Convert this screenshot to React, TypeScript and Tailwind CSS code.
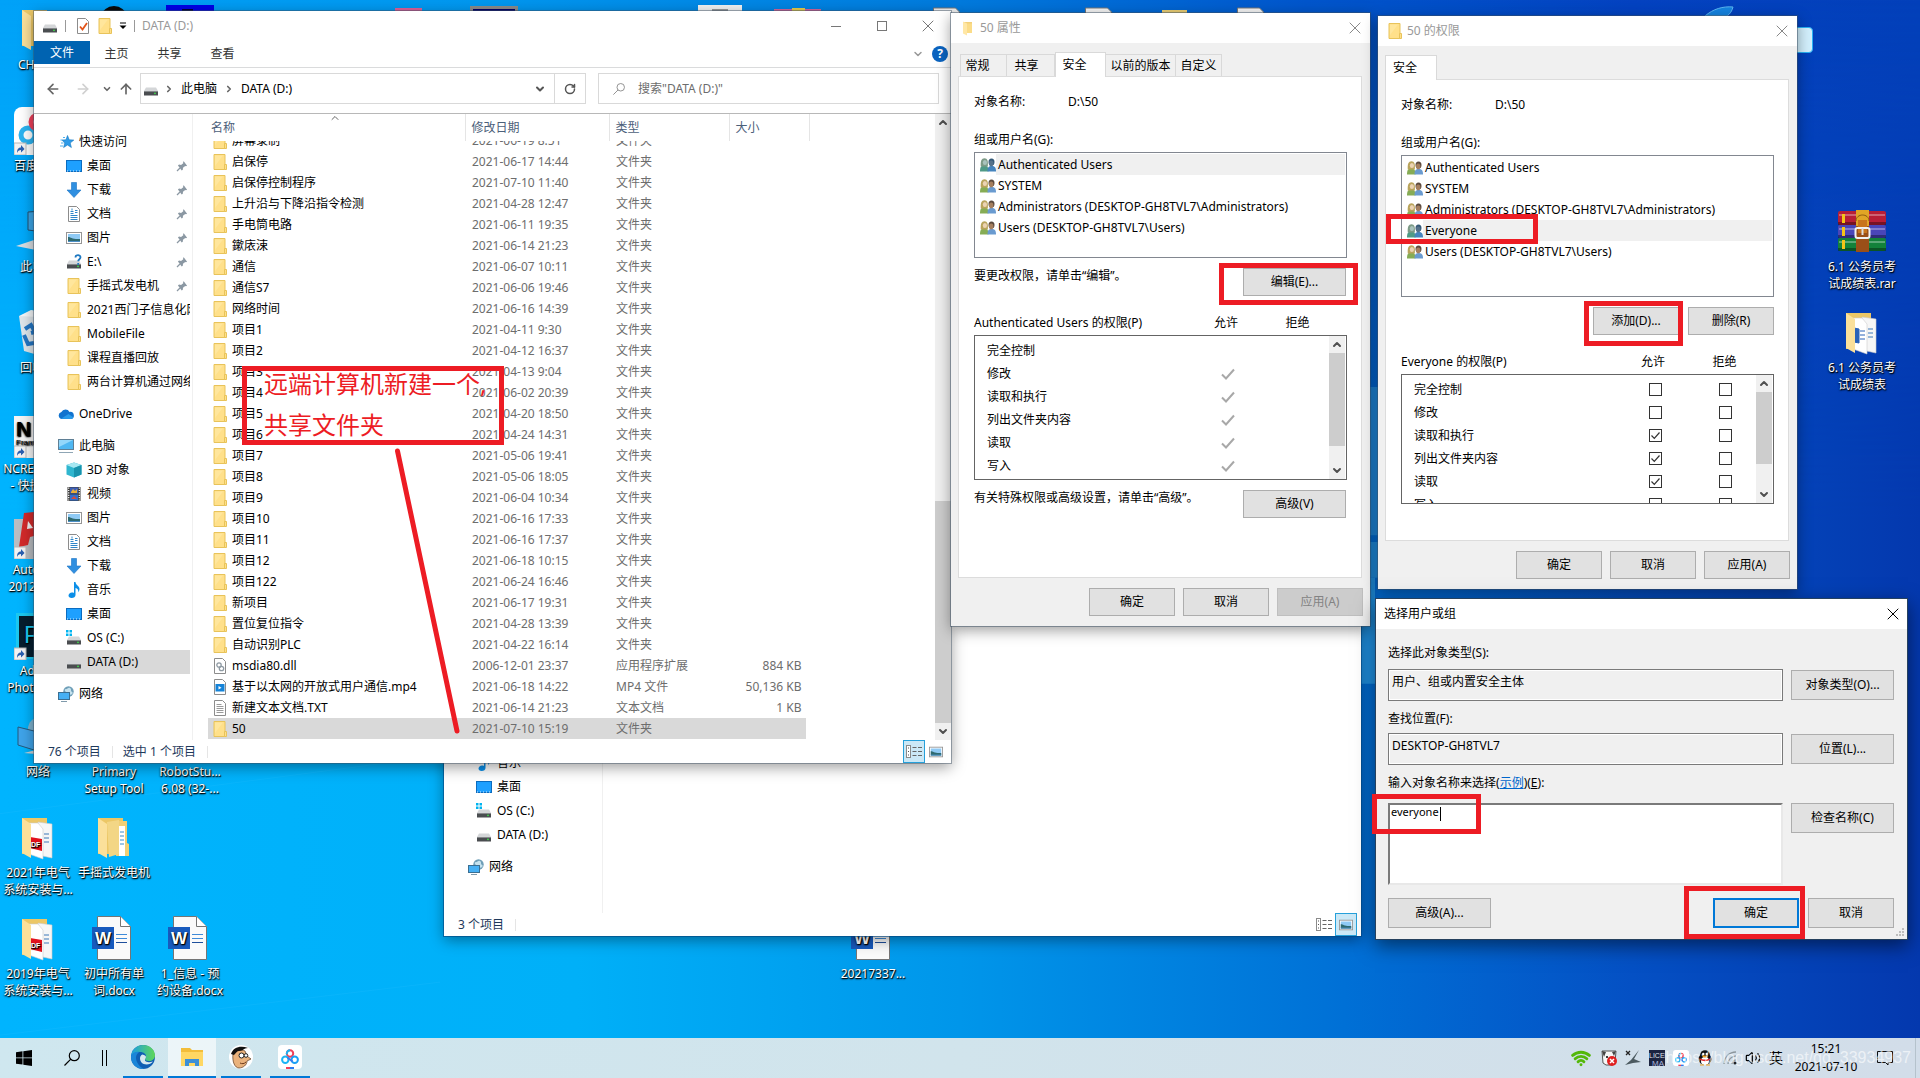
import React from 'react';
import { ArrowLeft, ArrowRight, ArrowUp, ChevronDown, ChevronRight, ChevronUp, RotateCw, Volume2, Wifi, X } from 'lucide-react';

interface FileRow {
  name: string;
  date: string;
  type?: string;
  size?: string;
  icon?: 'dll' | 'mp4' | 'txt';
}

interface NavItem {
  label: string;
  icon: React.ReactNode;
  pinned?: boolean;
  root?: boolean;
  gap?: boolean;
}

interface Permission {
  name: string;
  allow: boolean;
}

/* ---------- icons ---------- */

const FolderIcon: React.FC<{ className?: string }> = ({ className = 'w-4 h-4' }) => (
  <svg viewBox="0 0 16 16" className={className}>
    <path d="M2 .5h11v15H2z" fill="#ffe08a" stroke="#e8c35a" />
    <path d="M12.5 10.500h2v5h-2z" fill="#ffe08a" stroke="#e8c35a" />
    <path d="M3 1.500h8L3 12z" fill="#ffeaa8" opacity=".6" />
  </svg>
);

const OpenFolderIcon = () => (
  <svg viewBox="0 0 16 16" className="w-4 h-4">
    <path d="M4 2h8v10H4z" fill="#f3d07a" />
    <path d="M3 1.500l4 2v12l-4-2z" fill="#ffe7a6" />
    <path d="M7 3.500h5V13H7z" fill="#fbdc88" />
  </svg>
);

const MagnifierIcon: React.FC<{ className?: string }> = ({ className }) => (
  <svg viewBox="0 0 16 16" className={className}>
    <circle cx="10.300" cy="5.700" r="5" fill="none" stroke="currentColor" strokeWidth="1.200" />
    <path d="M6.800 9.200L.5 15.500" stroke="currentColor" strokeWidth="1.200" />
  </svg>
);

const DriveIcon: React.FC<{ kind?: 'os' | 'unknown' }> = ({ kind }) => (
  <svg viewBox="0 0 16 16" className="w-4 h-4">
    <path d="M3 6.500h10L15 10H1z" fill="#d4d6d8" />
    <rect x="1" y="10" width="14" height="4.500" fill="#4a4d50" />
    <rect x="1" y="10" width="14" height="1" fill="#85888b" />
    <circle cx="12" cy="12.300" r=".9" fill="#3ee04a" />
    {kind === 'os' && (
      <g fill="#00b4f0">
        <rect x="0" y="0" width="2.500" height="2.500" />
        <rect x="3.500" y="0" width="2.500" height="2.500" />
        <rect x="0" y="3.500" width="2.500" height="2.500" />
        <rect x="3.500" y="3.500" width="2.500" height="2.500" />
      </g>
    )}
    {kind === 'unknown' && (
      <path d="M9.500 3.500c0-3 5-3 5-.2 0 2-2.300 1.800-2.300 4M12.200 9v1.800" fill="none" stroke="#1f78c1" strokeWidth="1.800" />
    )}
  </svg>
);

const StarIcon = () => (
  <svg viewBox="0 0 16 16" className="w-4 h-4">
    <path d="M9.500 1.500l1.700 4.300 4.600.3-3.600 2.900 1.200 4.500-3.900-2.500-3.900 2.500 1.200-4.500L4 6.100l4-.3z" fill="#2e9be8" stroke="#1677c0" strokeWidth=".6" />
    <path d="M5 3.500h2M2.500 6h2M3 9h2.500M2 12h3" stroke="#4ab0f0" />
  </svg>
);

const DesktopNavIcon = () => (
  <svg viewBox="0 0 16 16" className="w-4 h-4">
    <rect x=".5" y="2.500" width="15" height="11" fill="#1ea0ff" stroke="#0b6cc0" />
    <path d="M1 13h14" stroke="#d8efff" strokeDasharray="1 2" />
  </svg>
);

const DownloadIcon = () => (
  <svg viewBox="0 0 16 16" className="w-4 h-4">
    <path d="M5.500 .5h5v7.500h4.500l-7 7.500-7-7.500h4.500z" fill="#2f8fe0" stroke="#1b74c4" strokeWidth=".6" />
  </svg>
);

const DocumentIcon = () => (
  <svg viewBox="0 0 16 16" className="w-4 h-4">
    <path d="M2.500 .5h8l3 3v12h-11z" fill="#fff" stroke="#8c8c8c" />
    <path d="M4.500 5.500h3M4.500 7.500h3M4.500 9.500h7M4.500 11.500h7M4.500 13.500h7" stroke="#2f86c8" />
    <path d="M6 2.500v2M9 4.500h2.500M9 6.500h2.500" stroke="#2f86c8" />
  </svg>
);

const PictureIcon: React.FC<{ className?: string }> = ({ className = 'w-4 h-4' }) => (
  <svg viewBox="0 0 16 16" className={className}>
    <rect x=".5" y="2.500" width="15" height="11" fill="#fff" stroke="#959595" />
    <rect x="2" y="4" width="12" height="8" fill="#8fcaf5" />
    <path d="M2 7c3 0 4 2.500 12 2v3H2z" fill="#2f6a70" />
    <path d="M2 11h12v1H2z" fill="#4d90c8" />
  </svg>
);

const CloudIcon = () => (
  <svg viewBox="0 0 16 16" className="w-4 h-4">
    <path d="M4 13a3.500 3.500 0 0 1-.6-6.900A4.500 4.500 0 0 1 11.500 6 3.500 3.500 0 0 1 13 13z" fill="#1173cf" />
    <path d="M3 12.800L10.500 8l4.800 3.200A2.500 2.500 0 0 1 13 13z" fill="#2a9bea" />
  </svg>
);

const ComputerIcon = () => (
  <svg viewBox="0 0 16 16" className="w-4 h-4">
    <rect x=".5" y="1.500" width="15" height="10" fill="#4fb7f2" stroke="#5f7f95" />
    <path d="M1 2h14L1 9z" fill="#93d7fb" />
    <path d="M1 14.500h14" stroke="#8fa6b5" />
  </svg>
);

const CubeIcon = () => (
  <svg viewBox="0 0 16 16" className="w-4 h-4">
    <path d="M8 .5l7.500 2.500v9.500L8 15.500.5 12.500V3z" fill="#2fb6cf" />
    <path d="M8 .5l7.500 2.500L8 6 .5 3z" fill="#a7e8f2" />
    <path d="M8 6l7.500-3v9.500L8 15.500z" fill="#1893ad" />
  </svg>
);

const VideoIcon = () => (
  <svg viewBox="0 0 16 16" className="w-4 h-4">
    <rect x="1.500" y="1" width="13" height="14" fill="#3b3b3b" />
    <rect x="4" y="1.500" width="8" height="6" fill="#3d5fb8" />
    <rect x="4" y="8.500" width="8" height="6" fill="#2f6fd0" />
    <path d="M5 6l2-3 2 2 2-2v4H5z" fill="#e8b03a" />
    <path d="M5 13l3-3 3 3z" fill="#d64a3a" />
    <path d="M2.700 1.500v13M13.300 1.500v13" stroke="#fff" strokeWidth="1.200" strokeDasharray="1.200 1.200" />
  </svg>
);

const MusicIcon = () => (
  <svg viewBox="0 0 16 16" className="w-4 h-4">
    <path d="M8 0h1.500c0 3 4 4 4 7 0 1.500-.8 2.700-1.200 3.200.3-2.700-1-3.700-2.800-4.200v7c0 1.700-1.700 3-3.800 3S2.500 15 2.500 13.500 4 10.500 6 10.500c.8 0 1.500.2 2 .4z" fill="#0b8fe8" />
  </svg>
);

const NetworkIcon = () => (
  <svg viewBox="0 0 16 16" className="w-4 h-4">
    <circle cx="10.500" cy="5.500" r="5.200" fill="#6f9fb8" />
    <path d="M7 3c2 1 3-2 5-1s0 3 2 4-1 4-3 2-5-2-4-5z" fill="#c6e2ee" />
    <rect x=".5" y="6.500" width="11" height="7" fill="#46b0f4" stroke="#3b6f92" />
    <path d="M3 15.500h6" stroke="#7f9aab" />
  </svg>
);

const DllIcon = () => (
  <svg viewBox="0 0 16 16" className="w-4 h-4">
    <path d="M2.500 .5h8l3 3v12h-11z" fill="#fff" stroke="#8c8c8c" />
    <circle cx="7" cy="7" r="2.200" fill="none" stroke="#8f9aa3" strokeWidth="1.300" />
    <circle cx="9.500" cy="10.500" r="2.200" fill="none" stroke="#8f9aa3" strokeWidth="1.300" />
  </svg>
);

const Mp4Icon = () => (
  <svg viewBox="0 0 16 16" className="w-4 h-4">
    <path d="M2.500 .5h8l3 3v12h-11z" fill="#fff" stroke="#8c8c8c" />
    <rect x="3.500" y="5" width="9" height="7.500" fill="#1583d8" />
    <path d="M6.500 7v3.500l3-1.700z" fill="#fff" />
  </svg>
);

const TxtIcon = () => (
  <svg viewBox="0 0 16 16" className="w-4 h-4">
    <path d="M2.500 .5h8l3 3v12h-11z" fill="#fff" stroke="#8c8c8c" />
    <path d="M4.500 4.500h5M4.500 6.500h7M4.500 8.500h7M4.500 10.500h7M4.500 12.500h7" stroke="#9a9a9a" />
  </svg>
);

const UsersIcon: React.FC<{ selected?: boolean }> = ({ selected }) => (
  <svg viewBox="0 0 16 14" className="w-4 h-[14px] shrink-0">
    <path d="M0 13.500c0-4 .8-6 4.200-6S8.500 9.500 8.500 13.500z" fill={selected ? '#4f9a86' : '#86ac55'} />
    <path d="M.8 8.500C.3 3 1.500.3 4.500.3S8.200 3 7.800 8.500z" fill={selected ? '#7d9a86' : '#b9a45c'} />
    <ellipse cx="4.900" cy="4.500" rx="2.100" ry="2.600" fill={selected ? '#a9c3bd' : '#ecd3b4'} />
    <path d="M7.500 13.500c0-4 1-5.500 4.200-5.500s4.300 1.500 4.300 5.500z" fill={selected ? '#4584bd' : '#6a9bd0'} />
    <ellipse cx="11.500" cy="4" rx="3" ry="3.500" fill={selected ? '#355a78' : '#5b4a3e'} />
    <ellipse cx="11.200" cy="5.400" rx="2.200" ry="2.800" fill={selected ? '#56728a' : '#a57f5f'} />
  </svg>
);

const PinIcon = () => (
  <svg viewBox="0 0 12 12" className="w-3 h-3">
    <path d="M7 1l4 4-1 .7-.8-.2-2 2 .1 2-1 1L1.900 6l1-1 2 .1 2-2L6.500 2z" fill="#8b98a3" transform="rotate(8 6 6)" />
    <path d="M4 8L1 11" stroke="#8b98a3" strokeWidth="1.200" />
  </svg>
);

const BigFolderIcon: React.FC<{ kind: 'pdf' | 'docs' | 'plain' | 'folders' }> = ({ kind }) => (
  <svg viewBox="0 0 48 48" className="w-12 h-12">
    <path d="M8 4h25v36H8z" fill="#ecc766" />
    {kind === 'folders' && (
      <g>
        <path d="M26 7h11v22l2 1v12H26z" fill="#f0cf77" />
        <path d="M29 12h6v30h-6z" fill="#fff" />
        <path d="M30 18h4M30 22h4M30 26h4M30 30h4" stroke="#3a8ccc" />
        <path d="M17 8l12-2v34l-10 3z" fill="#f3d685" />
      </g>
    )}
    {(kind === 'pdf' || kind === 'docs') && (
      <g>
        <path d="M24 8l14 2v34l-14-3z" fill="#f6f6f6" stroke="#c9c9c9" strokeWidth=".6" />
        <path d="M30 20h5M30 24h5M30 28h5" stroke="#3d79b8" />
        <path d="M15 9h9l5 6v30L15 40z" fill="#fff" stroke="#cfcfcf" strokeWidth=".6" />
      </g>
    )}
    {kind === 'pdf' && (
      <g>
        <path d="M16 23l12 2v12l-12-3z" fill="#e2101c" />
        <text x="17" y="33" fontSize="7" fontWeight="bold" fill="#fff" fontFamily="Liberation Sans">DF</text>
      </g>
    )}
    {kind === 'docs' && <path d="M16 19l5 1v14l-5-1zM22 22h5M22 26h5M22 30h5" fill="#2a62b8" stroke="#2a62b8" />}
    <path d="M8 4l9 6v34l-9-5z" fill="#fbe09a" />
  </svg>
);

const WordIcon = () => (
  <svg viewBox="4 1 48 48" className="w-12 h-12">
    <path d="M11.500 2.500h23l10 10v33h-33z" fill="#fafafa" stroke="#757575" />
    <path d="M34.500 2.500v10h10" fill="#fff" stroke="#757575" />
    <path d="M30 20.500h11M30 24.500h11" stroke="#3f8ad8" />
    <path d="M30 28.500h11" stroke="#1f4f9c" />
    <rect x="6" y="13" width="22" height="22" fill="#185abd" />
    <text x="17" y="30" fontSize="17" fontWeight="bold" fill="#fff" textAnchor="middle" fontFamily="Liberation Sans">W</text>
  </svg>
);

const RarIcon = () => (
  <svg viewBox="0 0 48 48" className="w-12 h-12">
    <rect x="0" y="3" width="48" height="14" rx="2" fill="#b81e36" />
    <rect x="0" y="17" width="48" height="13" rx="2" fill="#4a46b8" />
    <rect x="0" y="30" width="48" height="13" rx="2" fill="#13823a" />
    <path d="M1 7h46M1 21h46M1 34h46" stroke="#fff" opacity=".3" strokeWidth="2" />
    <path d="M0 15.500h48M0 28.500h48M0 41.500h48" stroke="#000" opacity=".35" strokeWidth="3" />
    <path d="M5.500 6v9M5.500 19v9M5.500 32v9" stroke="#f5c518" strokeWidth="3" />
    <rect x="18" y="2" width="13" height="16" fill="#e0a526" />
    <path d="M18 13c0-8 13-8 13 0" fill="none" stroke="#8a5a10" />
    <rect x="18" y="18" width="13" height="26" fill="#9a4f18" />
    <rect x="20" y="12" width="9" height="13" fill="#c8741c" />
    <rect x="17.500" y="20" width="14" height="10" rx="2" fill="none" stroke="#f1f1f1" strokeWidth="2" />
    <path d="M24.500 20v7" stroke="#ddd" strokeWidth="2" />
  </svg>
);

const BaiduIcon: React.FC<{ className?: string }> = ({ className }) => (
  <svg viewBox="0 0 24 24" className={className}>
    <rect width="24" height="24" rx="4" fill="#fff" />
    <circle cx="12" cy="8.500" r="3.200" fill="none" stroke="#f0405a" strokeWidth="2" />
    <path d="M9 9.500a3.200 3.200 0 0 1 0-2A3.300 3.300 0 0 1 12 5.200" fill="none" stroke="#19b4f5" strokeWidth="2" />
    <circle cx="7.300" cy="14.800" r="3.200" fill="none" stroke="#19b4f5" strokeWidth="2" />
    <circle cx="16.700" cy="14.800" r="3.200" fill="none" stroke="#19a0f5" strokeWidth="2" />
    <path d="M9.500 12.500l5 4" stroke="#3a7df0" strokeWidth="2" />
    <path d="M8 23h4" stroke="#f0405a" strokeWidth="2" />
    <path d="M12 23h4" stroke="#2b7bf0" strokeWidth="2" />
  </svg>
);

const ShortcutTile: React.FC<{ children: React.ReactNode }> = ({ children }) => (
  <svg viewBox="0 0 48 48" className="w-12 h-12">
    {children}
    <rect x="0" y="36" width="12" height="12" fill="#f3f3f3" stroke="#b8b8b8" />
    <path d="M3 46c0-4 1.500-5.500 4-5.500V38l3.500 4L7 45.500V43c-2 0-3 .8-4 3z" fill="#2a5fb0" />
  </svg>
);

/* ---------- data ---------- */

const quickAccess: NavItem[] = [
  { label: '快速访问', icon: <StarIcon />, root: true },
  { label: '桌面', icon: <DesktopNavIcon />, pinned: true },
  { label: '下载', icon: <DownloadIcon />, pinned: true },
  { label: '文档', icon: <DocumentIcon />, pinned: true },
  { label: '图片', icon: <PictureIcon />, pinned: true },
  { label: 'E:\\', icon: <DriveIcon kind="unknown" />, pinned: true },
  { label: '手摇式发电机', icon: <FolderIcon />, pinned: true },
  { label: '2021西门子信息化网络', icon: <FolderIcon /> },
  { label: 'MobileFile', icon: <FolderIcon /> },
  { label: '课程直播回放', icon: <FolderIcon /> },
  { label: '两台计算机通过网络', icon: <FolderIcon /> },
  { label: 'OneDrive', icon: <CloudIcon />, root: true, gap: true },
  { label: '此电脑', icon: <ComputerIcon />, root: true, gap: true },
  { label: '3D 对象', icon: <CubeIcon /> },
  { label: '视频', icon: <VideoIcon /> },
  { label: '图片', icon: <PictureIcon /> },
  { label: '文档', icon: <DocumentIcon /> },
  { label: '下载', icon: <DownloadIcon /> },
];

const drives: NavItem[] = [
  { label: '音乐', icon: <MusicIcon /> },
  { label: '桌面', icon: <DesktopNavIcon /> },
  { label: 'OS (C:)', icon: <DriveIcon kind="os" /> },
  { label: 'DATA (D:)', icon: <DriveIcon /> },
  { label: '网络', icon: <NetworkIcon />, root: true, gap: true },
];

const files: FileRow[] = [
  { name: '屏幕录制', date: '2021-06-19 8:51' },
  { name: '启保停', date: '2021-06-17 14:44' },
  { name: '启保停控制程序', date: '2021-07-10 11:40' },
  { name: '上升沿与下降沿指令检测', date: '2021-04-28 12:47' },
  { name: '手电筒电路', date: '2021-06-11 19:35' },
  { name: '鏉庡涑', date: '2021-06-14 21:23' },
  { name: '通信', date: '2021-06-07 10:11' },
  { name: '通信S7', date: '2021-06-06 19:46' },
  { name: '网络时间', date: '2021-06-16 14:39' },
  { name: '项目1', date: '2021-04-11 9:30' },
  { name: '项目2', date: '2021-04-12 16:37' },
  { name: '项目3', date: '2021-04-13 9:04' },
  { name: '项目4', date: '2021-06-02 20:39' },
  { name: '项目5', date: '2021-04-20 18:50' },
  { name: '项目6', date: '2021-04-24 14:31' },
  { name: '项目7', date: '2021-05-06 19:41' },
  { name: '项目8', date: '2021-05-06 18:05' },
  { name: '项目9', date: '2021-06-04 10:34' },
  { name: '项目10', date: '2021-06-16 17:33' },
  { name: '项目11', date: '2021-06-16 17:37' },
  { name: '项目12', date: '2021-06-18 10:15' },
  { name: '项目122', date: '2021-06-24 16:46' },
  { name: '新项目', date: '2021-06-17 19:31' },
  { name: '置位复位指令', date: '2021-04-28 13:39' },
  { name: '自动识别PLC', date: '2021-04-22 16:14' },
  { name: 'msdia80.dll', date: '2006-12-01 23:37', type: '应用程序扩展', size: '884 KB', icon: 'dll' },
  { name: '基于以太网的开放式用户通信.mp4', date: '2021-06-18 14:22', type: 'MP4 文件', size: '50,136 KB', icon: 'mp4' },
  { name: '新建文本文档.TXT', date: '2021-06-14 21:23', type: '文本文档', size: '1 KB', icon: 'txt' },
  { name: '50', date: '2021-07-10 15:19' },
];

const fileIcons = {
  dll: <DllIcon />,
  mp4: <Mp4Icon />,
  txt: <TxtIcon />,
};

const ADMINS = 'Administrators (DESKTOP-GH8TVL7\\Administrators)';
const USERS = 'Users (DESKTOP-GH8TVL7\\Users)';

const propertyPermissions: Permission[] = [
  { name: '完全控制', allow: false },
  { name: '修改', allow: true },
  { name: '读取和执行', allow: true },
  { name: '列出文件夹内容', allow: true },
  { name: '读取', allow: true },
  { name: '写入', allow: true },
];

const everyonePermissions: Permission[] = [
  { name: '完全控制', allow: false },
  { name: '修改', allow: false },
  { name: '读取和执行', allow: true },
  { name: '列出文件夹内容', allow: true },
  { name: '读取', allow: true },
  { name: '写入', allow: false },
];

/* ---------- explorer ---------- */

const NavList: React.FC<{ items: NavItem[]; selected?: string }> = ({ items, selected }) => (
  <ul>
    {items.map((item, i) => (
      <li key={i} className={item.gap ? 'pt-2' : ''}>
        <a
          href="#"
          className={`h-6 flex items-center gap-[5px] overflow-hidden whitespace-nowrap mr-[2px] ${item.root ? 'pl-6' : 'pl-8'} ${item.label === selected ? 'bg-[#d9d9d9]' : ''}`}
        >
          <span className="shrink-0">{item.icon}</span>
          <span className="flex-1">{item.label}</span>
          {item.pinned && <span className="pr-[2px]"><PinIcon /></span>}
        </a>
      </li>
    ))}
  </ul>
);

const ScrollBar: React.FC<{ before?: string; thumb: string }> = ({ before = '', thumb }) => (
  <div className="w-4 shrink-0 bg-[#f0f0f0] flex flex-col items-center text-[#505050]">
    <ChevronUp className="w-3 h-[17px]" strokeWidth={4} />
    <div className="flex-1 w-full flex flex-col">
      <div className={before} />
      <div className={`bg-[#cdcdcd] ${thumb}`} />
    </div>
    <ChevronDown className="w-3 h-[17px]" strokeWidth={4} />
  </div>
);

const StatusBar: React.FC<{ items: string[]; view: 'details' | 'icons' }> = ({ items, view }) => (
  <div className="h-[23px] flex items-center pl-[14px] pr-1 text-[#1e395b]">
    {items.map(text => (
      <span key={text} className="flex items-center pr-[10px]">
        {text}
        <span className="ml-[11px] w-px h-3 bg-[#e5e5e5]" />
      </span>
    ))}
    <button aria-label="详细信息" className={`ml-auto w-[22px] h-[23px] flex items-center justify-center ${view === 'details' ? 'border border-[#26a0da] bg-[#cbe8f6]' : ''}`}>
      <svg viewBox="0 0 16 14" className="w-4 h-[14px]">
        <rect x=".5" y=".5" width="4" height="12" fill="#fff" stroke="#8a8a8a" />
        <path d="M2 3h1M2 6.500h1M2 10h1" stroke="#555" />
        <path d="M6.500 2.500h4M12 2.500h4M6.500 6.500h4M12 6.500h4M6.500 10.500h4M12 10.500h4" stroke="#666" />
      </svg>
    </button>
    <button aria-label="大缩略图" className={`w-[22px] h-[23px] flex items-center justify-center ${view === 'icons' ? 'border border-[#26a0da] bg-[#cbe8f6]' : ''}`}>
      <PictureIcon className="w-[14px] h-[14px]" />
    </button>
  </div>
);

const FileTable = () => (
  <table className="table-fixed w-[602px] border-collapse text-left">
    <thead>
      <tr className="h-[27px] text-[#4c607a]">
        <th className="w-[257px] font-normal p-0 pl-[3px] border-r border-[#e5e5e5]">
          <div className="relative">
            名称
            <ChevronUp className="absolute left-[118px] -top-2 w-3 h-3 text-[#666]" strokeWidth={2} />
          </div>
        </th>
        <th className="w-[144px] font-normal p-0 pl-[6px] border-r border-[#e5e5e5]">修改日期</th>
        <th className="w-[120px] font-normal p-0 pl-[6px] border-r border-[#e5e5e5]">类型</th>
        <th className="font-normal p-0 pl-[6px] border-r border-[#e5e5e5]">大小</th>
      </tr>
    </thead>
    <tbody>
      {files.map((file, i) => {
        // the first row is half scrolled out of view
        const cell = i === 0 ? 'h-[10px] overflow-hidden flex flex-col justify-end' : 'h-[21px] flex flex-col justify-center';
        const tint = file.name === '50' ? 'bg-[#d9d9d9]' : '';
        return (
          <tr key={i}>
            <td className={`p-0 ${tint}`}>
              <div className={cell}>
                <div className="h-[21px] shrink-0 flex items-center gap-1 pl-1 whitespace-nowrap">
                  {file.icon ? fileIcons[file.icon] : <FolderIcon />}
                  {file.name}
                </div>
              </div>
            </td>
            <td className={`p-0 pl-[7px] text-[#6d6d6d] ${tint}`}>
              <div className={cell}><div className="h-[21px] shrink-0 flex items-center">{file.date}</div></div>
            </td>
            <td className={`p-0 pl-[7px] text-[#6d6d6d] ${tint}`}>
              <div className={cell}><div className="h-[21px] shrink-0 flex items-center">{file.type || '文件夹'}</div></div>
            </td>
            <td className="p-0 pr-1 text-right text-[#6d6d6d]">
              <div className={`${cell} pr-1 ${tint}`}>{file.size}</div>
            </td>
          </tr>
        );
      })}
    </tbody>
  </table>
);

const ExplorerWindow = () => (
  <section className="absolute left-[34px] top-[11px] w-[917px] h-[752px] bg-white flex flex-col shadow-[0_0_0_1px_rgba(60,80,100,0.45),0_4px_14px_rgba(0,0,0,0.4)]">
    <header className="h-[30px] flex items-center pl-2 text-[#999]">
      <DriveIcon />
      <span className="ml-[7px] w-px h-3 bg-[#999]" />
      <svg viewBox="0 0 16 16" className="ml-[9px] w-4 h-4">
        <path d="M2.500 .5h8l3 3v12h-11z" fill="#fff" stroke="#8c8c8c" />
        <path d="M5 8.500l2.500 3L12 5" fill="none" stroke="#e2541a" strokeWidth="1.800" />
      </svg>
      <FolderIcon className="ml-[6px] w-4 h-4" />
      <svg viewBox="0 0 8 8" className="ml-[6px] w-2 h-2 text-black">
        <path d="M1 1h6" stroke="currentColor" />
        <path d="M.5 3.500h7L4 7z" fill="currentColor" />
      </svg>
      <span className="ml-[7px] w-px h-3 bg-[#999]" />
      <span className="ml-[7px]">DATA (D:)</span>
      <div className="ml-auto flex items-center">
        <button aria-label="最小化" className="w-[46px] h-[29px] flex items-center justify-center"><span className="w-[10px] h-px bg-[#777]" /></button>
        <button aria-label="最大化" className="w-[46px] h-[29px] flex items-center justify-center"><span className="w-[10px] h-[10px] border border-[#777]" /></button>
        <button aria-label="关闭" className="w-[46px] h-[29px] flex items-center justify-center text-[#777]"><X className="w-5 h-5" strokeWidth={1.2} /></button>
      </div>
    </header>

    <nav className="h-[27px] flex items-start border-b border-[#dadbdc] text-[#333]">
      <button className="w-14 h-[23px] bg-[#0063b1] text-white">文件</button>
      <button className="w-[53px] h-[25px]">主页</button>
      <button className="w-[53px] h-[25px]">共享</button>
      <button className="w-[53px] h-[25px]">查看</button>
      <div className="ml-auto h-[26px] flex items-center gap-2 pr-[3px]">
        <ChevronDown className="w-3 h-3 text-[#999]" strokeWidth={3} />
        <button aria-label="帮助" className="w-4 h-4 rounded-full bg-[#0a63c0] text-white font-bold flex items-center justify-center">?</button>
      </div>
    </nav>

    <div className="h-[46px] flex items-center pl-[11px] pr-3 pb-[9px] pt-[5px] border-b border-[#b8b8b8]">
      <ArrowLeft className="w-4 h-4 text-[#666]" strokeWidth={2.5} />
      <ArrowRight className="ml-[14px] w-4 h-4 text-[#d0d0d0]" strokeWidth={2.5} />
      <ChevronDown className="ml-[11px] w-[10px] h-[10px] text-[#666]" strokeWidth={4} />
      <ArrowUp className="ml-[6px] w-4 h-4 text-[#666]" strokeWidth={2.5} />
      <div className="ml-[6px] w-[446px] h-[31px] border border-[#d9d9d9] flex items-center">
        <span className="ml-[2px]"><DriveIcon /></span>
        <ChevronRight className="ml-[5px] w-[10px] h-[10px] text-[#666]" strokeWidth={4} />
        <span className="ml-[7px]">此电脑</span>
        <ChevronRight className="ml-[7px] w-[10px] h-[10px] text-[#666]" strokeWidth={4} />
        <span className="ml-[7px]">DATA (D:)</span>
        <ChevronDown className="ml-auto mr-2 w-3 h-3 text-[#555]" strokeWidth={4} />
        <button aria-label="刷新" className="w-[31px] h-full border-l border-[#d9d9d9] flex items-center justify-center">
          <RotateCw className="w-3 h-3 text-[#555]" strokeWidth={3} />
        </button>
      </div>
      <label className="ml-3 flex-1 h-[31px] border border-[#d9d9d9] flex items-center">
        <MagnifierIcon className="ml-[14px] w-3 h-3 text-[#888]" />
        <input aria-label="搜索" placeholder={'搜索"DATA (D:)"'} className="ml-[13px] flex-1 outline-none placeholder:text-[#6d6d6d]" />
      </label>
    </div>

    <div className="flex-1 min-h-0 flex">
      <aside className="w-[159px] pt-4 border-r border-[#f0f0f0]">
        <NavList items={quickAccess} />
        <NavList items={drives} selected="DATA (D:)" />
      </aside>
      <div className="flex-1 pl-[15px]">
        <FileTable />
      </div>
      <ScrollBar before="flex-[370]" thumb="flex-[222]" />
    </div>

    <StatusBar items={['76 个项目', '选中 1 个项目']} view="details" />
  </section>
);

const BackgroundExplorer = () => (
  <section className="absolute left-[444px] top-[184px] w-[917px] h-[752px] bg-white flex flex-col shadow-[0_0_0_1px_rgba(0,70,130,0.6),0_4px_14px_rgba(0,0,0,0.4)]">
    <div className="flex-1 flex">
      <aside className="w-[159px] flex flex-col justify-end pb-[34px] border-r border-[#f0f0f0]">
        <NavList items={drives} />
      </aside>
    </div>
    <StatusBar items={['3 个项目']} view="icons" />
  </section>
);

/* ---------- dialogs ---------- */

const DialogButton: React.FC<{ children: React.ReactNode; className?: string; disabled?: boolean }> = ({ children, className = 'w-[86px] h-7', disabled }) => (
  <button
    disabled={disabled}
    className={`border text-center ${disabled ? 'bg-[#cccccc] border-[#bfbfbf] text-[#838383]' : 'bg-[#e1e1e1] border-[#adadad]'} ${className}`}
  >
    {children}
  </button>
);

const PrincipalList: React.FC<{ names: string[]; selected: string; className: string }> = ({ names, selected, className }) => (
  <ul className={`mt-1 border border-[#828790] bg-white p-px pl-[5px] ${className}`}>
    {names.map(name => (
      <li key={name} className="h-[21px] flex items-center whitespace-nowrap">
        <UsersIcon selected={name === selected} />
        <span className={`flex-1 h-full flex items-center pl-[2px] ${name === selected ? 'bg-[#f0f0f0]' : ''}`}>{name}</span>
      </li>
    ))}
  </ul>
);

const CheckBox: React.FC<{ label: string; checked?: boolean }> = ({ label, checked }) => (
  <span className="relative inline-block w-[13px] h-[13px] align-middle">
    <input type="checkbox" aria-label={label} defaultChecked={checked} className="peer appearance-none block w-[13px] h-[13px] border border-[#333] bg-white" />
    <svg viewBox="0 0 13 13" className="hidden peer-checked:block absolute inset-0 pointer-events-none">
      <path d="M2.500 6.500l2.800 2.800L10.500 3.500" fill="none" stroke="#333" strokeWidth="1.200" />
    </svg>
  </span>
);

const PermissionTable: React.FC<{ title: string; permissions: Permission[]; editable?: boolean; height: string; thumb: string }> = ({ title, permissions, editable, height, thumb }) => (
  <>
    <div className="mt-[19px] h-4 flex">
      <span className="w-[217px] whitespace-nowrap">{title}</span>
      <span className="w-[70px] text-center">允许</span>
      <span className="w-[73px] text-center">拒绝</span>
    </div>
    <div className={`mt-1 border border-[#646464] bg-white flex overflow-hidden pr-px ${height}`}>
      <div className="flex-1 pt-[3px]">
        <table className="table-fixed w-full border-collapse">
          <tbody>
            {permissions.map(p => (
              <tr key={p.name} className="h-[23px]">
                <td className="w-[218px] p-0 pl-3">{p.name}</td>
                <td className="w-[70px] p-0 text-center leading-none">
                  {editable && <CheckBox label={`${p.name} 允许`} checked={p.allow} />}
                  {!editable && p.allow && (
                    <svg viewBox="0 0 14 12" className="inline-block w-[14px] h-3">
                      <path d="M1 6.500L5 10.500 13 1.500" fill="none" stroke="#a8a8a8" strokeWidth="2" />
                    </svg>
                  )}
                </td>
                <td className="p-0 pl-1 text-center leading-none">{editable && <CheckBox label={`${p.name} 拒绝`} />}</td>
              </tr>
            ))}
          </tbody>
        </table>
      </div>
      <ScrollBar thumb={thumb} />
    </div>
  </>
);

const SecurityHeading = () => (
  <>
    <div className="h-4 flex">
      <span className="w-[94px]">对象名称:</span>
      <span>D:\50</span>
    </div>
    <div className="mt-[22px] h-4">组或用户名(G):</div>
  </>
);

const TitleBar: React.FC<{ title: string; icon: React.ReactNode }> = ({ title, icon }) => (
  <header className="h-[30px] bg-white flex items-center pl-[9px] pr-[5px] text-[#999]">
    {icon}
    <span className="ml-1">{title}</span>
    <button aria-label="关闭" className="ml-auto text-[#888]"><X className="w-5 h-5" strokeWidth={1.2} /></button>
  </header>
);

const PropertiesDialog = () => (
  <section className="absolute left-[951px] top-[13px] w-[419px] bg-[#f0f0f0] shadow-[0_0_0_1px_rgba(60,80,100,0.5),0_4px_14px_rgba(0,0,0,0.4)]">
    <TitleBar title="50 属性" icon={<OpenFolderIcon />} />
    <div className="pt-[9px] pl-[9px] flex items-end">
      <button className="w-[47px] h-[22px] border border-b-0 border-[#d9d9d9] pr-3">常规</button>
      <button className="w-[48px] h-[22px] border border-b-0 border-l-0 border-[#d9d9d9] pr-2">共享</button>
      <button className="relative z-10 w-[51px] h-[25px] -mb-px bg-white border border-b-0 border-[#d9d9d9] pr-3 pb-px">安全</button>
      <button className="w-[70px] h-[22px] border border-b-0 border-l-0 border-[#d9d9d9] whitespace-nowrap">以前的版本</button>
      <button className="w-[46px] h-[22px] border border-b-0 border-l-0 border-[#d9d9d9]">自定义</button>
    </div>
    <div className="ml-[7px] mr-2 bg-white border border-[#dcdcdc] pt-[17px] pl-[15px] pr-[14px] pb-[59px]">
      <SecurityHeading />
      <PrincipalList className="h-[106px]" selected="Authenticated Users" names={['Authenticated Users', 'SYSTEM', ADMINS, USERS]} />
      <div className="mt-[10px] pr-px flex justify-between items-start">
        <span>要更改权限，请单击“编辑”。</span>
        <DialogButton className="w-[103px] h-7">编辑(E)...</DialogButton>
      </div>
      <PermissionTable title="Authenticated Users 的权限(P)" permissions={propertyPermissions} height="h-[145px]" thumb="h-[93px]" />
      <div className="mt-[10px] pr-px flex justify-between items-start">
        <span>有关特殊权限或高级设置，请单击“高级”。</span>
        <DialogButton className="w-[103px] h-7">高级(V)</DialogButton>
      </div>
    </div>
    <footer className="pt-[10px] pb-[10px] pr-[7px] flex justify-end gap-2">
      <DialogButton>确定</DialogButton>
      <DialogButton>取消</DialogButton>
      <DialogButton disabled>应用(A)</DialogButton>
    </footer>
  </section>
);

const PermissionsDialog = () => (
  <section className="absolute left-[1378px] top-[16px] w-[419px] bg-[#f0f0f0] shadow-[0_0_0_1px_rgba(60,80,100,0.5),0_4px_14px_rgba(0,0,0,0.4)]">
    <TitleBar title="50 的权限" icon={<FolderIcon />} />
    <div className="pt-[9px] pl-[7px] flex">
      <button className="relative z-10 w-[52px] h-[25px] -mb-px bg-white border border-b-0 border-[#d9d9d9] pr-3">安全</button>
    </div>
    <div className="ml-[7px] mr-2 bg-white border border-[#dcdcdc] pt-[17px] pl-[15px] pr-[14px] pb-[36px]">
      <SecurityHeading />
      <PrincipalList className="h-[142px]" selected="Everyone" names={['Authenticated Users', 'SYSTEM', ADMINS, 'Everyone', USERS]} />
      <div className="mt-[10px] flex justify-end gap-[9px]">
        <DialogButton>添加(D)...</DialogButton>
        <DialogButton>删除(R)</DialogButton>
      </div>
      <PermissionTable title="Everyone 的权限(P)" permissions={everyonePermissions} editable height="h-[130px]" thumb="h-[72px]" />
    </div>
    <footer className="pt-[10px] pb-[10px] pr-[7px] flex justify-end gap-2">
      <DialogButton>确定</DialogButton>
      <DialogButton>取消</DialogButton>
      <DialogButton>应用(A)</DialogButton>
    </footer>
  </section>
);

const SelectUsersDialog = () => (
  <section className="absolute left-[1375px] top-[598px] w-[533px] bg-[#f0f0f0] border border-[#26415e] shadow-[0_6px_18px_rgba(0,0,0,0.5)]">
    <header className="h-[30px] bg-white flex items-center pl-2 pr-1">
      <span>选择用户或组</span>
      <button aria-label="关闭" className="ml-auto"><X className="w-5 h-5" strokeWidth={1.2} /></button>
    </header>
    <div className="pt-4 pl-3 pr-[13px] pb-[11px]">
      <label htmlFor="objectType" className="block">选择此对象类型(S):</label>
      <div className="mt-2 flex gap-2 items-center">
        <input id="objectType" readOnly value="用户、组或内置安全主体" className="flex-1 h-8 border border-[#7a7a7a] shadow-[inset_0_0_0_1px_#fff] px-[3px] pb-2 outline-none" />
        <DialogButton className="w-[103px] h-[30px]">对象类型(O)...</DialogButton>
      </div>
      <label htmlFor="location" className="block mt-[10px]">查找位置(F):</label>
      <div className="mt-[6px] flex gap-2 items-center">
        <input id="location" readOnly value="DESKTOP-GH8TVL7" className="flex-1 h-8 border border-[#7a7a7a] shadow-[inset_0_0_0_1px_#fff] px-[3px] pb-2 outline-none" />
        <DialogButton className="w-[103px] h-[30px]">位置(L)...</DialogButton>
      </div>
      <div className="mt-[10px]">
        <label htmlFor="objectNames">输入对象名称来选择</label>(<a href="#" className="text-[#0066cc] underline">示例</a>)(<span className="underline">E</span>):
      </div>
      <div className="mt-3 flex gap-2 items-start">
        <div className="relative flex-1">
          <textarea id="objectNames" defaultValue="everyone" className="block w-full h-[82px] resize-none bg-white border-2 border-t-[#7a7a7a] border-l-[#7a7a7a] border-r-[#e8e8e8] border-b-[#e8e8e8] px-px text-[11px] outline-none" />
          <span className="absolute left-[52px] top-1 w-px h-[14px] bg-black" />
        </div>
        <DialogButton className="w-[103px] h-[30px]">检查名称(C)</DialogButton>
      </div>
      <div className="mt-[13px] flex gap-[9px]">
        <DialogButton className="w-[103px] h-[30px]">高级(A)...</DialogButton>
        <button className="ml-auto w-[86px] h-[30px] bg-[#e1e1e1] border-2 border-[#0078d7]">确定</button>
        <DialogButton className="w-[86px] h-[30px]">取消</DialogButton>
      </div>
    </div>
    <svg viewBox="0 0 9 9" className="absolute right-[2px] bottom-[2px] w-[9px] h-[9px]">
      <path d="M6 0h2v2H6zM3 3h2v2H3zM6 3h2v2H6zM0 6h2v2H0zM3 6h2v2H3zM6 6h2v2H6z" fill="#bdbdbd" />
    </svg>
  </section>
);

/* ---------- desktop ---------- */

const DesktopIcon: React.FC<{ place: string; label: React.ReactNode; children?: React.ReactNode }> = ({ place, label, children }) => (
  <div className={`absolute w-[76px] flex flex-col items-center text-center text-white leading-[17px] whitespace-nowrap [text-shadow:0_1px_2px_#000,1px_1px_1px_#000] ${place}`}>
    <div className="w-12 h-12 mb-[2px]">{children}</div>
    <div>{label}</div>
  </div>
);

const Wallpaper = () => (
  <svg viewBox="0 0 1920 1078" preserveAspectRatio="none" className="absolute inset-0 w-full h-full">
    <defs>
      <linearGradient id="sky" x1="0" y1="0" x2="1" y2="0">
        <stop offset="0" stopColor="#00a2f8" />
        <stop offset=".25" stopColor="#0098f0" />
        <stop offset=".5" stopColor="#007add" />
        <stop offset=".68" stopColor="#0056cc" />
        <stop offset=".85" stopColor="#0442c0" />
        <stop offset="1" stopColor="#0340ba" />
      </linearGradient>
      <linearGradient id="ground" x1="0" y1="0" x2="1" y2="0">
        <stop offset="0" stopColor="#00b4fe" />
        <stop offset=".3" stopColor="#00b0f8" />
        <stop offset=".5" stopColor="#0096ea" />
        <stop offset=".7" stopColor="#0070d6" />
        <stop offset=".85" stopColor="#0450c4" />
        <stop offset="1" stopColor="#0438ae" />
      </linearGradient>
      <linearGradient id="fade" x1="0" y1="0" x2="0" y2="1">
        <stop offset="0" stopColor="#fff" stopOpacity="0" />
        <stop offset=".5" stopColor="#fff" stopOpacity="1" />
      </linearGradient>
      <mask id="lower"><rect width="1920" height="1078" fill="url(#fade)" /></mask>
    </defs>
    <rect width="1920" height="1078" fill="url(#sky)" />
    <rect width="1920" height="1078" fill="url(#ground)" mask="url(#lower)" />
    <path d="M1361 402l178 0v154l-178 0z" fill="#1e88dc" />
    <path d="M1361 563h178v37h-178z" fill="#1f8de0" />
    <path d="M1540 563v37" stroke="#4fd0e8" strokeWidth="2" />
    <path d="M1361 600h14v110h-14z" fill="#2093e6" />
    <path d="M0 845L440 785M0 1075l440-55" stroke="#3cc4ff" strokeWidth="1" opacity=".15" />
  </svg>
);

// tops of the icons that peek out above the windows
const TopRowIcons = () => (
  <svg viewBox="0 0 1800 60" className="absolute left-0 top-0 w-[1800px] h-[60px]">
    <ellipse cx="114" cy="16" rx="12" ry="10" fill="#0a0a0a" />
    <path d="M166 5h48v10h-48z" fill="#0000e8" />
    <path d="M182 9h11v4h-11z" fill="#00003c" />
    <path d="M395 8h27v6h-27z" fill="#e0609a" />
    <path d="M470 6h48v8h-48z" fill="#8a8a8a" />
    <path d="M473 9h42v5h-42z" fill="#000068" />
    <path d="M698 5h44v8h-44z" fill="#f2f2f2" />
    <path d="M712 9h16v3h-16z" fill="#999" />
    <path d="M774 9h47v4h-47z" fill="#d8649c" />
    <path d="M792 8h13v4h-13z" fill="#e8cc4a" />
    <path d="M933.500 8v8h26v-4l-4-4zM1085.500 8v8h26v-4l-4-4zM1237.500 8v8h26v-4l-4-4z" fill="#f5f5f5" stroke="#777" />
    <path d="M1162 10h25v6h-25z" fill="#e9cd74" />
    <path d="M1705 16c8-7 18-10 28-9-1 4-3 7-6 9z" fill="#1583e0" stroke="#5ab4f0" />
  </svg>
);

const Desktop = () => (
  <>
    <Wallpaper />
    <TopRowIcons />
    <DesktopIcon place="left-0 top-[6px]" label="CHKCD"><BigFolderIcon kind="plain" /></DesktopIcon>
    <DesktopIcon place="left-0 top-[107px]" label="百度网盘">
      <ShortcutTile>
        <rect width="48" height="48" rx="8" fill="#fff" />
        <circle cx="14" cy="28" r="7" fill="none" stroke="#2bb3f0" strokeWidth="5" />
        <circle cx="24" cy="15" r="7" fill="none" stroke="#f0405a" strokeWidth="5" />
      </ShortcutTile>
    </DesktopIcon>
    <DesktopIcon place="left-0 top-[208px]" label="此电脑">
      <svg viewBox="0 0 48 48" className="w-12 h-12">
        <path d="M14 4l30-2v24l-30-4z" fill="#3ca6e8" stroke="#24506e" />
        <path d="M2 38l18-6 20 4-18 6z" fill="#d9dee2" />
      </svg>
    </DesktopIcon>
    <DesktopIcon place="left-0 top-[309px]" label="回收站">
      <svg viewBox="0 0 48 48" className="w-12 h-12">
        <path d="M5 7h38l-5 36-14 3-14-4z" fill="#dfe7ec" />
        <path d="M5 7l12-6 22 3 4 5z" fill="#f4f7f9" />
        <path d="M11 20l6-4 4 7-4 1M10 26l4 9 6-1" fill="none" stroke="#2376c4" strokeWidth="4" />
      </svg>
    </DesktopIcon>
    <DesktopIcon place="left-0 top-[410px]" label={<>NCRE Frame<br />- 快捷方式</>}>
      <ShortcutTile>
        <rect y="6" width="48" height="42" fill="#f5f5f5" />
        <text x="2" y="26" fontSize="21" fontWeight="bold" fontFamily="Liberation Sans">N</text>
        <text x="2" y="35" fontSize="8" fontFamily="Liberation Sans">Frame</text>
      </ShortcutTile>
    </DesktopIcon>
    <DesktopIcon place="left-0 top-[511px]" label={<>AutoCAD<br />2012 - 简...</>}>
      <ShortcutTile>
        <rect y="8" width="48" height="40" fill="#b9bdc2" />
        <path d="M5 36L10 2l10-1 16 30-11 2-5-8-4 1-2 8z" fill="#d22a2a" />
        <path d="M13 18l1-8 5 7z" fill="#f1f1f1" />
      </ShortcutTile>
    </DesktopIcon>
    <DesktopIcon place="left-0 top-[612px]" label={<>Adobe<br />Photoshop</>}>
      <ShortcutTile>
        <rect x="2" y="1" width="46" height="46" fill="#1cc8f0" />
        <rect x="5" y="4" width="43" height="41" fill="#061e2e" />
        <text x="10" y="31" fontSize="24" fill="#1cc8f0" fontFamily="Liberation Sans">Ps</text>
      </ShortcutTile>
    </DesktopIcon>
    <DesktopIcon place="left-0 top-[713px]" label="网络">
      <svg viewBox="0 0 48 48" className="w-12 h-12">
        <circle cx="26" cy="16" r="12" fill="#7fb4d0" />
        <path d="M4 14l32 8v20L4 32z" fill="#3fa4ea" stroke="#26597c" />
        <path d="M10 40l12-3 12 5z" fill="#c9d2d8" />
      </svg>
    </DesktopIcon>
    <DesktopIcon place="left-[76px] top-[713px]" label={<>Primary<br />Setup Tool</>} />
    <DesktopIcon place="left-[152px] top-[713px]" label={<>RobotStu...<br />6.08 (32-...</>} />
    <DesktopIcon place="left-0 top-[814px]" label={<>2021年电气<br />系统安装与...</>}><BigFolderIcon kind="pdf" /></DesktopIcon>
    <DesktopIcon place="left-[76px] top-[814px]" label="手摇式发电机"><BigFolderIcon kind="folders" /></DesktopIcon>
    <DesktopIcon place="left-0 top-[915px]" label={<>2019年电气<br />系统安装与...</>}><BigFolderIcon kind="pdf" /></DesktopIcon>
    <DesktopIcon place="left-[76px] top-[915px]" label={<>初中所有单<br />词.docx</>}><WordIcon /></DesktopIcon>
    <DesktopIcon place="left-[152px] top-[915px]" label={<>1_信息 - 预<br />约设备.docx</>}><WordIcon /></DesktopIcon>
    <DesktopIcon place="left-[835px] top-[915px]" label="20217337..."><WordIcon /></DesktopIcon>
    <DesktopIcon place="left-[1824px] top-[208px]" label={<>6.1 公务员考<br />试成绩表.rar</>}><RarIcon /></DesktopIcon>
    <DesktopIcon place="left-[1824px] top-[309px]" label={<>6.1 公务员考<br />试成绩表</>}><BigFolderIcon kind="docs" /></DesktopIcon>
    <div className="absolute left-[1790px] top-[27px] w-[23px] h-[26px] rounded bg-[#d3f0fd] border border-[#29b2f5]" />
  </>
);

/* ---------- hand drawn notes ---------- */

const Annotations = () => (
  <div className="absolute inset-0 pointer-events-none">
    <div className="absolute left-[242px] top-[366px] w-[262px] h-[79px] border-[5px] border-[#ed1c24] pl-[17px] text-[24px] leading-[41px] text-[#ed1c24] whitespace-nowrap">
      <p className="-mt-2">远端计算机新建一个,</p>
      <p>共享文件夹</p>
    </div>
    <svg viewBox="0 0 1920 1038" className="absolute left-0 top-0 w-[1920px] h-[1038px]">
      <path d="M397.500 451L457 731" stroke="#ed1c24" strokeWidth="5" strokeLinecap="round" />
    </svg>
    <div className="absolute left-[1219px] top-[263px] w-[139px] h-[42px] border-[5px] border-[#ed1c24]" />
    <div className="absolute left-[1386px] top-[214px] w-[152px] h-[30px] border-[5px] border-[#ed1c24]" />
    <div className="absolute left-[1584px] top-[301px] w-[99px] h-[45px] border-[5px] border-[#ed1c24]" />
    <div className="absolute left-[1372px] top-[794px] w-[109px] h-[40px] border-[5px] border-[#ed1c24]" />
    <div className="absolute left-[1684px] top-[886px] w-[121px] h-[53px] border-[5px] border-[#ed1c24]" />
  </div>
);

/* ---------- taskbar ---------- */

const TaskButton: React.FC<{ label: string; active?: boolean; children: React.ReactNode }> = ({ label, active, children }) => (
  <button aria-label={label} className={`h-10 flex items-center justify-center border-b-2 border-[#0078d7] ${active ? 'w-12 bg-white/60' : 'w-10'}`}>
    {children}
  </button>
);

const Taskbar = () => (
  <footer className="relative h-10 shrink-0 flex items-center bg-gradient-to-r from-[#cfe7ef] via-[#d1e4ec] to-[#d2dde9]">
    <button aria-label="开始" className="w-12 h-10 flex items-center justify-center">
      <svg viewBox="0 0 16 16" className="w-4 h-4">
        <path d="M0 2.200l6.500-.9v6.200H0zM7.300 1.200L16 0v7.500H7.300zM0 8.300h6.500v6.300L0 13.700zM7.300 8.300H16V16l-8.700-1.200z" />
      </svg>
    </button>
    <button aria-label="搜索" className="w-12 h-10 flex items-center justify-center">
      <MagnifierIcon className="w-4 h-4" />
    </button>
    <div className="w-[27px] h-4 ml-[6px] flex gap-[3px]"><span className="w-px bg-black" /><span className="w-px bg-black" /></div>
    <div className="flex items-center ml-[-6px]">
      <TaskButton label="Edge">
        <svg viewBox="0 0 24 24" className="w-6 h-6">
          <defs>
            <linearGradient id="edgeTop" x1="0" y1="0" x2="1" y2="0">
              <stop offset="0" stopColor="#1b9de2" />
              <stop offset="1" stopColor="#5fd856" />
            </linearGradient>
          </defs>
          <circle cx="12" cy="12" r="12" fill="#0f5fb4" />
          <path d="M0 11C1 4 6 0 12 0c7 0 12 5 12 10.500 0 3.500-3 5.500-6 5.500-2.500 0-4-1-4-2s1-1.500 1-3-2-4-6-4c-4 0-8 2-9 4z" fill="url(#edgeTop)" />
          <path d="M0 11c1-3 5-4.500 8.500-4.200C5 9 4 13 6 17c1.500 3.500 4 5.500 7 7C5 24.500-.5 18 0 11z" fill="#1b86d8" />
          <path d="M14 15.500c1 1.500 3.500 2.500 8 1-1.500 2-4 3-6.500 3-4 0-6.500-3-6.500-6 0-2 1-3.500 2.500-4 2 .3 3.500 1.500 3.500 2.500s-1.500 2-1 3.500z" fill="#d4e8ef" />
        </svg>
      </TaskButton>
      <span className="w-[5px]" />
      <TaskButton label="文件资源管理器" active>
        <svg viewBox="0 0 24 24" className="w-6 h-6">
          <path d="M1 3h9l2 2h11v16H1z" fill="#f3bd3a" />
          <path d="M1 7h22v14H1z" fill="#ffd763" />
          <path d="M5 21v-7h14v7h-4v-3H9v3z" fill="#3d8fd6" />
        </svg>
      </TaskButton>
      <span className="w-[5px]" />
      <TaskButton label="头像">
        <svg viewBox="0 0 24 24" className="w-6 h-6">
          <circle cx="12" cy="12" r="12" fill="#fff" />
          <path d="M4 9c2-4 8-5 12-3l2 5 4 3-4 2c0 4-4 7-8 7s-7-6-6-14z" fill="#eab27c" stroke="#5a3a20" strokeWidth=".7" />
          <path d="M2 9C4 2 12 0 19 3c-5 0-4 3-9 3-2 0-3 2-5 4z" fill="#111" />
          <circle cx="12.500" cy="10.500" r="2.500" fill="#fff" stroke="#222" />
          <circle cx="17" cy="10.500" r="1.800" fill="#fff" stroke="#222" />
          <path d="M11 18c2 1 4 1 6-1" fill="none" stroke="#6d3a1c" />
        </svg>
      </TaskButton>
      <span className="w-[9px]" />
      <TaskButton label="百度网盘"><BaiduIcon className="w-6 h-6" /></TaskButton>
    </div>

    <div className="ml-auto flex items-center">
      <Wifi className="w-5 h-5 text-[#54b80a]" strokeWidth={3.5} />
      <svg viewBox="0 0 16 16" className="ml-[10px] w-4 h-4">
        <path d="M1 1h14l-1 12-3 2H5l-3-2z" fill="#f6f6f6" stroke="#555" />
        <path d="M1 1l4 1-2 5zM15 1l-4 1 2 4z" fill="#444" />
        <circle cx="6" cy="7" r="1" />
        <circle cx="11" cy="11" r="5" fill="#e02020" />
        <path d="M9 9l4 4M13 9l-4 4" stroke="#fff" strokeWidth="1.500" />
      </svg>
      <svg viewBox="0 0 16 16" className="ml-2 w-4 h-4">
        <path d="M14 0L9 9l7 3-8 1-8 2 6-5z" fill="#4c5a60" />
        <path d="M1 1l4 4M5 1L1 5" stroke="#222" strokeWidth="1.300" />
      </svg>
      <svg viewBox="0 0 16 16" className="ml-2 w-4 h-4">
        <rect width="16" height="16" fill="#1c2440" />
        <text x="0" y="8" fontSize="7" fill="#dfe3ee" fontFamily="Liberation Sans">LICEN</text>
        <text x="3" y="15.500" fontSize="8" fill="#a9b6dc" fontFamily="Liberation Sans">MA</text>
      </svg>
      <BaiduIcon className="ml-2 w-4 h-4" />
      <svg viewBox="0 0 16 16" className="ml-2 w-4 h-4">
        <ellipse cx="8" cy="9" rx="6.500" ry="6" fill="#111" />
        <circle cx="8" cy="5" r="4.800" fill="#111" />
        <ellipse cx="8" cy="11" rx="4" ry="4" fill="#fff" />
        <path d="M2.500 8c3 2 8 2 11 0l-.5 2c-3 1.500-7 1.500-10 0z" fill="#e22222" />
        <circle cx="6.300" cy="4" r="1.200" fill="#fff" />
        <circle cx="9.700" cy="4" r="1.200" fill="#fff" />
        <path d="M5.500 6h5L8 7.300zM3 15h4M9 15h4" fill="#f5a623" stroke="#f5a623" />
      </svg>
      <svg viewBox="0 0 14 14" className="ml-[10px] w-[14px] h-[14px]">
        <path d="M1 13A12 12 0 0 1 13 1M5 13a8 8 0 0 1 8-8M9 13a4 4 0 0 1 4-4" fill="none" stroke="#8c969c" strokeWidth="1.300" />
        <circle cx="12" cy="12" r="1.500" fill="#222" />
      </svg>
      <Volume2 className="ml-2 w-4 h-4" strokeWidth={1.8} />
      <span className="ml-2 text-[14px]">英</span>
      <div className="w-[86px] text-center leading-[18px]">
        <div>15:21</div>
        <div>2021-07-10</div>
      </div>
      <button aria-label="通知" className="ml-2 w-4 h-10 flex items-center">
        <svg viewBox="0 0 16 16" className="w-4 h-4">
          <path d="M.5 1.500h15v11H11V15l-2.500-2.500h-8z" fill="none" stroke="#111" />
        </svg>
      </button>
      <span className="ml-[22px] mr-1 w-px h-10 bg-[#b5c2cc]" />
    </div>
    <span className="absolute right-[9px] top-2 text-[16px] leading-6 text-white/60 font-['Liberation_Sans']">https://blog.csdn.net/qq_33934937</span>
  </footer>
);

export default function App() {
  return (
    <div className="h-screen flex flex-col overflow-hidden bg-[#0078d7] text-xs text-black font-['Noto_Sans','Noto_Sans_CJK_SC',sans-serif]">
      <main className="relative flex-1 overflow-hidden">
        <Desktop />
        <BackgroundExplorer />
        <ExplorerWindow />
        <PropertiesDialog />
        <PermissionsDialog />
        <SelectUsersDialog />
        <Annotations />
      </main>
      <Taskbar />
    </div>
  );
}
